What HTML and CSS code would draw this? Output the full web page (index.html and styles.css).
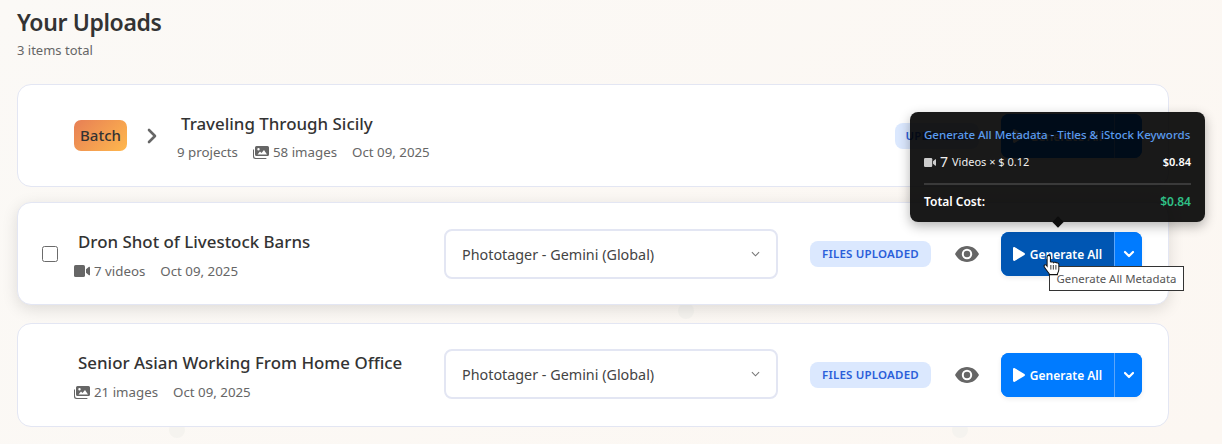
FILE: index.html
```html
<!DOCTYPE html>
<html lang="en">
<head>
    <meta charset="UTF-8">
    <title>Your Uploads</title>
    <link rel="stylesheet" href="styles.css">
</head>
<body>
    <svg class="defs" width="0" height="0">
        <symbol id="i-video" viewBox="0 0 16 12"><rect x="0" y="0" width="11" height="12" rx="1.6"/><path d="M12 4.3 15 1.8c.4-.3 1-.1 1 .5v7.400c0 .6-.6.8-1 .5l-3-2.500z"/></symbol>
        <symbol id="i-images" viewBox="0 0 16 13"><path d="M3.500 0h11A1.500 1.500 0 0 1 16 1.500v7a1.500 1.500 0 0 1-1.500 1.500h-11A1.500 1.500 0 0 1 2 8.500v-7A1.500 1.500 0 0 1 3.500 0zm1 8.500h9.500L11 4 8.500 7 7 5.500zM5.500 2a1.200 1.200 0 1 0 0 2.400 1.200 1.200 0 0 0 0-2.400z" fill-rule="evenodd"/><path d="M0 3.500h1V10a2 2 0 0 0 2 2h10.500v.300A.7.7 0 0 1 12.800 13H2.500A2.500 2.500 0 0 1 0 10.500z"/></symbol>
        <symbol id="i-eye" viewBox="0 0 24 16"><path fill-rule="evenodd" d="M12 0c5.500 0 9.800 3.600 12 8-2.200 4.400-6.500 8-12 8S2.200 12.400 0 8c2.200-4.400 6.500-8 12-8zm0 2.800a5.200 5.200 0 1 0 0 10.400 5.200 5.200 0 0 0 0-10.400zm0 2a3.200 3.200 0 1 1 0 6.400 3.200 3.200 0 0 1 0-6.400z"/></symbol>
        <symbol id="i-play" viewBox="0 0 12 14"><path d="M0 1.200C0 .3 1-.3 1.800.2l9.600 5.700c.8.500.8 1.700 0 2.200l-9.600 5.700C1 14.300 0 13.700 0 12.800z"/></symbol>
    </svg>

    <i class="ghost-dot dot-a"></i>
    <i class="ghost-dot dot-b"></i>
    <i class="ghost-dot dot-c"></i>

    <header class="page-head">
        <h1>Your Uploads</h1>
        <p>3 items total</p>
    </header>

    <div class="upload-list">
        <div class="card card-batch">
            <span class="batch-tag">Batch</span>
            <svg class="batch-arrow" viewBox="0 0 10 16"><path d="M2 2l6 6-6 6" fill="none" stroke="currentColor" stroke-width="2.600" stroke-linecap="round" stroke-linejoin="round"/></svg>
            <div class="info">
                <div class="title">Traveling Through Sicily</div>
                <div class="meta">
                    <span>9 projects</span>
                    <span class="meta-item"><svg class="ic-images"><use href="#i-images"/></svg>58 images</span>
                    <span>Oct 09, 2025</span>
                </div>
            </div>
            <span class="status status-batch">UPLOADED</span>
            <div class="split-btn split-batch">
                <button class="gen-main"><svg class="ic-play"><use href="#i-play"/></svg>Generate All</button>
                <button class="gen-caret"><svg viewBox="0 0 12 8"><path d="M2 2l4 4 4-4" fill="none" stroke="currentColor" stroke-width="2.200" stroke-linecap="round" stroke-linejoin="round"/></svg></button>
            </div>
        </div>

        <div class="card card-hover">
            <span class="check-slot"><input type="checkbox"></span>
            <div class="info">
                <div class="title">Dron Shot of Livestock Barns</div>
                <div class="meta">
                    <span class="meta-item"><svg class="ic-video"><use href="#i-video"/></svg>7 videos</span>
                    <span>Oct 09, 2025</span>
                </div>
            </div>
            <div class="model-select"><span>Phototager - Gemini (Global)</span><svg viewBox="0 0 10 6"><path d="M1 1l4 4 4-4" fill="none" stroke="currentColor" stroke-width="1.200"/></svg></div>
            <span class="status">FILES UPLOADED</span>
            <svg class="ic-eye"><use href="#i-eye"/></svg>
            <div class="split-btn">
                <button class="gen-main is-hover"><svg class="ic-play"><use href="#i-play"/></svg>Generate All</button>
                <button class="gen-caret"><svg viewBox="0 0 12 8"><path d="M2 2l4 4 4-4" fill="none" stroke="currentColor" stroke-width="2.200" stroke-linecap="round" stroke-linejoin="round"/></svg></button>
            </div>
        </div>

        <div class="card card-last">
            <span class="check-slot"></span>
            <div class="info">
                <div class="title">Senior Asian Working From Home Office</div>
                <div class="meta">
                    <span class="meta-item"><svg class="ic-images"><use href="#i-images"/></svg>21 images</span>
                    <span>Oct 09, 2025</span>
                </div>
            </div>
            <div class="model-select"><span>Phototager - Gemini (Global)</span><svg viewBox="0 0 10 6"><path d="M1 1l4 4 4-4" fill="none" stroke="currentColor" stroke-width="1.200"/></svg></div>
            <span class="status">FILES UPLOADED</span>
            <svg class="ic-eye"><use href="#i-eye"/></svg>
            <div class="split-btn">
                <button class="gen-main"><svg class="ic-play"><use href="#i-play"/></svg>Generate All</button>
                <button class="gen-caret"><svg viewBox="0 0 12 8"><path d="M2 2l4 4 4-4" fill="none" stroke="currentColor" stroke-width="2.200" stroke-linecap="round" stroke-linejoin="round"/></svg></button>
            </div>
        </div>
    </div>

    <div class="cost-tip">
        <div class="tip-title">Generate All Metadata - Titles &amp; iStock Keywords</div>
        <div class="tip-row">
            <span class="tip-left"><svg class="ic-video-tip"><use href="#i-video"/></svg><b class="tip-num">7</b> Videos × $ 0.12</span>
            <span class="tip-amount">$0.84</span>
        </div>
        <div class="tip-total">
            <span>Total Cost:</span>
            <span class="tip-green">$0.84</span>
        </div>
        <i class="tip-arrow"></i>
    </div>

    <div class="native-tip">Generate All Metadata</div>

    <svg class="hand" viewBox="0 0 18 24"><path d="M6 1.500c1 0 1.800.8 1.800 1.800V9c0-.3 3.300-.6 3.500.2.200-.4 2.800-.4 3 .4.400-.2 2.700 0 2.700 1.600v5.300c0 2.500-.8 3.500-1.500 5v1H6.500v-1c-1.500-2-4-5-5.300-7.200-.5-1-.4-1.900.3-2.300.8-.5 1.800 0 2.700 1.300V3.300c0-1 .8-1.800 1.800-1.800z" fill="#fff" stroke="#111" stroke-width="1.100"/><path d="M8.300 12v5M11 12v5M13.800 12v5" stroke="#111" stroke-width=".9" fill="none"/></svg>
</body>
</html>
```

FILE: styles.css
```css
* {
    box-sizing: border-box;
}
html, body {
    height: 100%;
}
body {
    margin: 0;
    padding: 6px 53px 0 17px;
    font-family: "Noto Sans", "Open Sans", sans-serif;
    color: #333;
    background: linear-gradient(135deg, #fbf9f6, #fcf7f2);
    overflow: hidden;
    position: relative;
}
.defs {
    position: absolute;
}
.ghost-dot {
    position: absolute;
    width: 16px;
    height: 16px;
    border-radius: 50%;
    background: #f5f3ef;
}
.dot-a {
    left: 678px;
    top: 303px;
}
.dot-b {
    left: 169px;
    top: 422px;
}
.dot-c {
    left: 952px;
    top: 422px;
}
.page-head h1 {
    margin: 0;
    font-size: 23px;
    line-height: 32px;
    font-weight: 600;
    letter-spacing: -0.38px;
    color: #333;
}
.page-head p {
    margin: 3px 0 0;
    font-size: 13px;
    line-height: 18px;
    color: #666;
}
.upload-list {
    margin-top: 25px;
    display: flex;
    flex-direction: column;
    position: relative;
}
.card {
    display: flex;
    align-items: center;
    background: #fff;
    border: 1px solid #e3e6f3;
    border-radius: 14px;
    padding: 1px 26px 0 24px;
    height: 103px;
}
.card-batch {
    padding-left: 56px;
}
.card-hover {
    margin-top: 15px;
    box-shadow: 0 4px 16px rgba(0, 0, 0, 0.12);
}
.card-last {
    margin-top: 18px;
    height: 104px;
    padding-top: 0;
}
.check-slot {
    width: 16px;
    height: 16px;
    margin-right: 16px;
    flex: none;
}
.check-slot input {
    display: block;
    width: 16px;
    height: 16px;
    margin: 0;
    appearance: none;
    background: #fff;
    border: 1px solid #6b6b6b;
    border-radius: 2.500px;
}
.batch-tag {
    width: 53px;
    height: 31px;
    margin-bottom: 2px;
    border-radius: 7px;
    background: linear-gradient(135deg, #e77f55, #ffb84d);
    font-size: 15px;
    font-weight: 500;
    line-height: 31px;
    text-align: center;
    color: #333;
    flex: none;
}
.batch-arrow {
    width: 10px;
    height: 16px;
    margin: 0 20px 0 20px;
    color: #666;
    flex: none;
}
.info {
    flex: 1;
    min-width: 0;
    padding-top: 2px;
}
.title {
    padding-left: 4px;
    font-size: 16.900px;
    font-weight: 500;
    line-height: 24px;
    color: #333;
}
.meta {
    display: flex;
    gap: 15px;
    margin-top: 8px;
    font-size: 13.300px;
    line-height: 18px;
    color: #666;
}
.card-batch .meta {
    margin-top: 7px;
    margin-bottom: 1px;
}
.meta-item {
    display: flex;
    align-items: center;
    gap: 4px;
}
.ic-images {
    width: 16px;
    height: 13px;
    fill: #666;
}
.ic-video {
    width: 16px;
    height: 12px;
    fill: #666;
}
.model-select {
    width: 334px;
    height: 50px;
    margin-right: 32px;
    padding: 1px 16px 0 16px;
    display: flex;
    align-items: center;
    justify-content: space-between;
    background: #fff;
    border: 2px solid #e3e6f3;
    border-radius: 8px;
    font-size: 14.350px;
    color: #444;
    flex: none;
}
.card-last .model-select {
    margin-bottom: 2px;
}
.model-select svg {
    width: 9px;
    height: 6px;
    margin-top: -2px;
    color: #777;
}
.status {
    width: 121px;
    height: 26px;
    border-radius: 8px;
    background: #dbe8fe;
    color: #2b5fd9;
    font-size: 11.500px;
    font-weight: 600;
    line-height: 26px;
    letter-spacing: 0.2px;
    text-align: center;
    flex: none;
}
.status-batch {
    width: 84px;
}
.ic-eye {
    width: 24px;
    height: 16px;
    margin: 0 22px 0 24px;
    fill: #666;
    flex: none;
}
.split-btn {
    display: flex;
    width: 141px;
    height: 44px;
    flex: none;
    border-radius: 8px;
    overflow: hidden;
    background: #007bff;
    box-shadow: 0 2px 5px rgba(0, 0, 0, 0.08);
}
.split-batch {
    margin-left: 22px;
}
.gen-main, .gen-caret {
    border: 0;
    padding: 0;
    margin: 0;
    color: #fff;
    background: #007bff;
    font-family: inherit;
    display: flex;
    align-items: center;
    justify-content: center;
}
.gen-main {
    width: 113px;
    gap: 5px;
    font-size: 12px;
    font-weight: 600;
}
.gen-main.is-hover {
    background: #0056b3;
}
.gen-caret {
    flex: 1;
    border-left: 1px solid #5aa5fa;
}
.gen-caret svg {
    width: 12px;
    height: 8px;
}
.ic-play {
    width: 12px;
    height: 14px;
    fill: #fff;
}
.cost-tip {
    position: absolute;
    left: 910px;
    top: 112px;
    width: 295px;
    height: 110px;
    padding: 14px 14px 0;
    background: rgba(0, 0, 0, 0.9);
    border-radius: 8px;
    box-shadow: 0 4px 12px rgba(0, 0, 0, 0.3);
    color: #fff;
    font-size: 11.500px;
}
.tip-title {
    color: #5a9bee;
    font-weight: 500;
    font-size: 11.500px;
    line-height: 18px;
    white-space: nowrap;
}
.tip-row, .tip-total {
    display: flex;
    justify-content: space-between;
    align-items: center;
}
.tip-row {
    margin-top: 9px;
    line-height: 18px;
    padding-bottom: 12px;
    border-bottom: 2px solid #3a3a3a;
}
.tip-left {
    display: flex;
    align-items: center;
    gap: 4px;
    font-size: 11px;
    color: #eee;
}
.tip-num {
    font-weight: 400;
    font-size: 14px;
}
.ic-video-tip {
    width: 12px;
    height: 9px;
    fill: #ccc;
}
.tip-amount {
    font-weight: 600;
    font-size: 11px;
}
.tip-total {
    margin-top: 8px;
    font-weight: 600;
    font-size: 12px;
}
.tip-green {
    color: #2fbf85;
}
.tip-arrow {
    position: absolute;
    left: 144px;
    bottom: -4px;
    width: 8px;
    height: 8px;
    background: #0d0d0d;
    transform: rotate(45deg);
}
.native-tip {
    position: absolute;
    left: 1049px;
    top: 266px;
    width: 135px;
    height: 25px;
    background: #fff;
    border: 1px solid #333;
    font-size: 11.400px;
    line-height: 23px;
    text-align: center;
    color: #555;
}
.hand {
    position: absolute;
    left: 1043px;
    top: 254px;
    width: 17px;
    height: 22px;
}
```
